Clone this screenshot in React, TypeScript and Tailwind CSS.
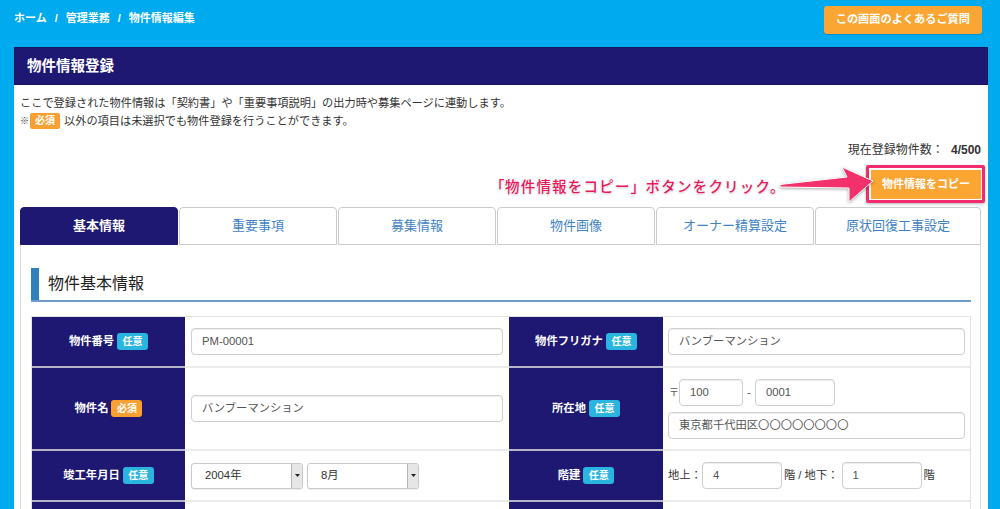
import React from "react";

function Badge({ type }: { type: "任意" | "必須" }) {
    const color = type === "必須" ? "bg-[#f8a132]" : "bg-[#29b5e0]";
    return (
        <span className={`inline-flex items-center justify-center h-[17px] w-[31px] rounded-[3px] text-[10px] leading-none font-bold text-white ${color}`}>
            {type}
        </span>
    );
}

function Label({ text, type }: { text: string; type: "任意" | "必須" }) {
    return (
        <div className="bg-[#1e1873] border-b-2 border-[#b4b4c6] flex items-center justify-center gap-[3px] text-white font-bold text-[11.3px] leading-none">
            <span>{text}</span>
            <Badge type={type} />
        </div>
    );
}

function TextBox({ value, className }: { value: string; className?: string }) {
    return (
        <div className={`h-[27px] border border-[#cfcfcf] rounded-[4px] bg-white flex items-center pl-[10px] text-[11.3px] text-[#555] shadow-[inset_0_1px_1px_rgba(0,0,0,0.07)] ${className ?? ""}`}>
            {value}
        </div>
    );
}

function SelectBox({ value }: { value: string }) {
    return (
        <div className="w-[112px] h-[26px] border border-[#c9c9c9] rounded-[3px] bg-white flex items-stretch overflow-hidden shadow-[0_1px_1px_rgba(0,0,0,0.08)]">
            <span className="flex-1 flex items-center pl-[13px] text-[11.3px] text-[#333]">{value}</span>
            <span className="w-[11px] bg-[#e6e6e6] border-l border-[#b5b5b5] flex items-center justify-center">
                <svg width="5" height="3" viewBox="0 0 5 3"><path d="M0 0h5L2.5 3z" fill="#222" /></svg>
            </span>
        </div>
    );
}

const tabs = ["基本情報", "重要事項", "募集情報", "物件画像", "オーナー精算設定", "原状回復工事設定"];

export default function App() {
    return (
        <div className="relative h-[509px] overflow-hidden bg-[#00aaef] font-['Liberation_Sans','Noto_Sans_CJK_JP',sans-serif]">
            {/* top bar */}
            <div className="h-[47px] flex items-start justify-between pl-[14px] pr-[18px]">
                <div className="pt-[11px] text-[11px] leading-[14px] font-bold text-white flex">
                    <span>ホーム</span>
                    <span className="px-[8px]">/</span>
                    <span>管理業務</span>
                    <span className="px-[8px]">/</span>
                    <span>物件情報編集</span>
                </div>
                <button className="mt-[6px] h-[28px] px-[12px] rounded-[3px] bg-[#fba533] text-white text-[11.2px] font-bold leading-none shadow-[0_1px_0_rgba(0,0,0,0.15)]">
                    この画面のよくあるご質問
                </button>
            </div>

            {/* panel */}
            <div className="ml-[14px] mr-[12px] bg-white">
                <div className="h-[38px] bg-[#1e1873] border border-[#17125e] flex items-center pl-[12px] pt-[1px] text-white text-[14.5px] font-bold">
                    物件情報登録
                </div>
                <div className="pl-[6px] pr-[7px] pt-[9px]">
                    <p className="text-[11.2px] leading-[18px] text-[#333]">
                        ここで登録された物件情報は「契約書」や「重要事項説明」の出力時や募集ページに連動します。
                    </p>
                    <p className="text-[11.2px] leading-[18px] text-[#333] flex items-center">
                        <span className="text-[9px] text-[#333] w-[9px]">※</span>
                        <span className="inline-flex items-center justify-center h-[16px] w-[30px] rounded-[2px] bg-[#f8a132] text-white text-[10px] font-bold leading-none ml-[1px]">必須</span>
                        <span className="ml-[4px]">以外の項目は未選択でも物件登録を行うことができます。</span>
                    </p>
                    <div className="mt-[11px] text-right text-[12px] leading-[18px] text-[#333]">
                        現在登録物件数： <b className="ml-[4px]">4/500</b>
                    </div>
                    <div className="mt-[11px] flex justify-end">
                        <div className="relative">
                            <button className="h-[29px] w-[110px] bg-[#fba533] text-white text-[11px] font-bold leading-none">
                                物件情報をコピー
                            </button>
                            <div className="absolute -left-[5px] -right-[4px] -top-[5px] -bottom-[4px] border-[3px] border-[#f02c6c] rounded-[2px] shadow-[0_1px_3px_rgba(0,0,0,0.3)] pointer-events-none" />
                        </div>
                    </div>

                    {/* tabs */}
                    <div className="mt-[8px] flex gap-px">
                        {tabs.map((t, i) => (
                            <div
                                key={t}
                                className={
                                    i === 0
                                        ? "w-[158px] h-[38px] rounded-t-[4px] bg-[#1e1873] border border-[#1e1873] flex items-center justify-center text-white text-[13px] font-bold"
                                        : i === 5
                                          ? "flex-1 h-[38px] rounded-t-[4px] bg-white border border-[#cccccc] flex items-center justify-center text-[#4283c4] text-[13px]"
                                          : "w-[158px] h-[38px] rounded-t-[4px] bg-white border border-[#cccccc] flex items-center justify-center text-[#4283c4] text-[13px]"
                                }
                            >
                                {t}
                            </div>
                        ))}
                    </div>

                    <div className="border-x border-b border-[#dddddd] pl-[10px] pr-[9px] pt-[23px] pb-[20px]">
                        <div className="h-[34px] flex items-stretch border-b-2 border-[#6f9bcb]">
                            <span className="w-[8px] bg-[#2f80bd]" />
                            <span className="pl-[9px] flex items-center text-[16px] text-[#222]">物件基本情報</span>
                        </div>

                        <div className="mt-[14px] border border-[#e2e2e2] border-b-0">
                            {/* row 1 */}
                            <div className="grid grid-cols-[153px_324px_154px_1fr] h-[51px]">
                                <Label text="物件番号" type="任意" />
                                <div className="border-b-2 border-[#ececec] flex items-center px-[6px]">
                                    <TextBox value="PM-00001" className="w-full" />
                                </div>
                                <Label text="物件フリガナ" type="任意" />
                                <div className="border-b-2 border-[#ececec] flex items-center px-[5px]">
                                    <TextBox value="バンブーマンション" className="w-full" />
                                </div>
                            </div>
                            {/* row 2 */}
                            <div className="grid grid-cols-[153px_324px_154px_1fr] h-[83px]">
                                <Label text="物件名" type="必須" />
                                <div className="border-b-2 border-[#ececec] flex items-center px-[6px]">
                                    <TextBox value="バンブーマンション" className="w-full" />
                                </div>
                                <Label text="所在地" type="任意" />
                                <div className="border-b-2 border-[#ececec] flex flex-col justify-center gap-[6px] px-[5px]">
                                    <div className="flex items-center text-[11.3px] text-[#555]">
                                        <span className="w-[11px] pl-[1px] text-[10px]">〒</span>
                                        <TextBox value="100" className="w-[64px] h-[26px]" />
                                        <span className="w-[12px] text-center">-</span>
                                        <TextBox value="0001" className="w-[80px] h-[26px]" />
                                    </div>
                                    <TextBox value="東京都千代田区〇〇〇〇〇〇〇〇" className="w-full" />
                                </div>
                            </div>
                            {/* row 3 */}
                            <div className="grid grid-cols-[153px_324px_154px_1fr] h-[51px]">
                                <Label text="竣工年月日" type="任意" />
                                <div className="border-b-2 border-[#ececec] flex items-center gap-[4px] px-[6px]">
                                    <SelectBox value="2004年" />
                                    <SelectBox value="8月" />
                                </div>
                                <Label text="階建" type="任意" />
                                <div className="border-b-2 border-[#ececec] flex items-center px-[5px] text-[11.3px] text-[#333]">
                                    <span>地上：</span>
                                    <TextBox value="4" className="w-[80px] h-[26px]" />
                                    <span className="ml-[2px] mr-[3px]">階 / 地下：</span>
                                    <TextBox value="1" className="w-[80px] h-[26px]" />
                                    <span className="ml-[2px]">階</span>
                                </div>
                            </div>
                            {/* row 4 */}
                            <div className="grid grid-cols-[153px_324px_154px_1fr] h-[50px]">
                                <div className="bg-[#1e1873]" />
                                <div />
                                <div className="bg-[#1e1873]" />
                                <div />
                            </div>
                        </div>
                    </div>
                </div>
            </div>

            {/* annotation overlay */}
            <div className="absolute left-[490px] top-[177px] flex text-[14.5px] leading-[20px] font-medium tracking-[1.2px] text-[#e8185c] whitespace-nowrap [text-shadow:0_0_2px_#fff,0_0_2px_#fff,0_1px_2px_rgba(0,0,0,0.3)]">
                <span className="w-[15px] text-right">「</span>
                <span>物件情報をコピー</span>
                <span className="w-[15px]">」</span>
                <span>ボタンをクリック。</span>
            </div>
            <svg className="absolute left-[770px] top-[160px]" width="110" height="50" viewBox="0 0 110 50">
                <polygon
                    points="10,24.5 77,17 72,7 103,21 79,42 79,28 10,27"
                    fill="#f2306c"
                    stroke="#ffffff"
                    strokeWidth="1"
                    strokeLinejoin="round"
                    style={{ filter: "drop-shadow(0 1px 1.5px rgba(0,0,0,0.35))" }}
                />
            </svg>
        </div>
    );
}
